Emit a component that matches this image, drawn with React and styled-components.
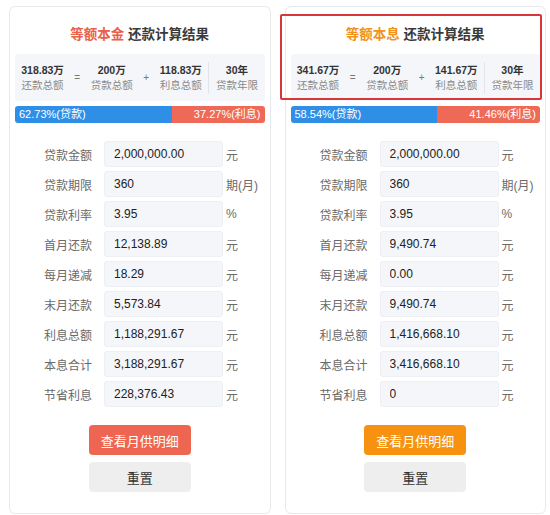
import React from "react";
import styled, { createGlobalStyle } from "styled-components";

const GlobalStyle = createGlobalStyle`
  html, body {
    margin: 0;
    padding: 0;
    background: #ffffff;
    font-family: "Liberation Sans", "Noto Sans CJK SC", sans-serif;
  }
`;

const plans = [
  {
    name: "等额本金",
    accent: "#e9604b",
    button: "#ee6552",
    total: "318.83万",
    principal: "200万",
    interest: "118.83万",
    years: "30年",
    loanPct: 62.73,
    interestPct: "37.27",
    rows: [
      ["贷款金额", "2,000,000.00", "元"],
      ["贷款期限", "360", "期(月)"],
      ["贷款利率", "3.95", "%"],
      ["首月还款", "12,138.89", "元"],
      ["每月递减", "18.29", "元"],
      ["末月还款", "5,573.84", "元"],
      ["利息总额", "1,188,291.67", "元"],
      ["本息合计", "3,188,291.67", "元"],
      ["节省利息", "228,376.43", "元"],
    ],
  },
  {
    name: "等额本息",
    accent: "#f0921c",
    button: "#f79110",
    total: "341.67万",
    principal: "200万",
    interest: "141.67万",
    years: "30年",
    loanPct: 58.54,
    interestPct: "41.46",
    highlight: true,
    rows: [
      ["贷款金额", "2,000,000.00", "元"],
      ["贷款期限", "360", "期(月)"],
      ["贷款利率", "3.95", "%"],
      ["首月还款", "9,490.74", "元"],
      ["每月递减", "0.00", "元"],
      ["末月还款", "9,490.74", "元"],
      ["利息总额", "1,416,668.10", "元"],
      ["本息合计", "3,416,668.10", "元"],
      ["节省利息", "0", "元"],
    ],
  },
];

const ResultCard = ({ plan }) => (
  <Card>
    {plan.highlight && <Highlight />}
    <Title>
      <TitleAccent $color={plan.accent}>{plan.name}</TitleAccent> 还款计算结果
    </Title>
    <Summary>
      <Stat>
        <StatValue>{plan.total}</StatValue>
        <StatLabel>还款总额</StatLabel>
      </Stat>
      <Sign>=</Sign>
      <Stat>
        <StatValue>{plan.principal}</StatValue>
        <StatLabel>贷款总额</StatLabel>
      </Stat>
      <Sign>+</Sign>
      <Stat>
        <StatValue>{plan.interest}</StatValue>
        <StatLabel>利息总额</StatLabel>
      </Stat>
      <Divider />
      <Stat>
        <StatValue>{plan.years}</StatValue>
        <StatLabel>贷款年限</StatLabel>
      </Stat>
    </Summary>
    <Bar>
      <BarPart $color="#2f8fe7" style={{ width: `${plan.loanPct}%` }}>
        {plan.loanPct}%(贷款)
      </BarPart>
      <BarPart $color="#ef6a56" $right>
        {plan.interestPct}%(利息)
      </BarPart>
    </Bar>
    <FormGrid>
      {plan.rows.map(([label, value, unit]) => (
        <React.Fragment key={label}>
          <FieldLabel>{label}</FieldLabel>
          <FieldInput type="text" value={value} readOnly />
          <Unit>{unit}</Unit>
        </React.Fragment>
      ))}
    </FormGrid>
    <Buttons>
      <Button $bg={plan.button} $fg="#ffffff">查看月供明细</Button>
      <Button $bg="#eeeeee" $fg="#333333">重置</Button>
    </Buttons>
  </Card>
);

const App = () => (
  <>
    <GlobalStyle />
    <Page>
      {plans.map((plan) => (
        <ResultCard key={plan.name} plan={plan} />
      ))}
    </Page>
  </>
);

export default App;

const Page = styled.div`
  display: flex;
  gap: 14px;
  padding: 6px 4px 0 9px;
  height: 515px;
  box-sizing: border-box;
  overflow: hidden;
`;

const Card = styled.div`
  position: relative;
  width: 262px;
  height: 508px;
  box-sizing: border-box;
  border: 1px solid #e6e8eb;
  border-radius: 6px;
  padding: 0 5px;
  display: flex;
  flex-direction: column;
  align-items: stretch;
`;

const Highlight = styled.div`
  position: absolute;
  left: -6px;
  top: 7px;
  width: 262px;
  height: 86px;
  box-sizing: border-box;
  border: 2px solid #d8373a;
  border-radius: 2px;
`;

const Title = styled.div`
  text-align: center;
  font-size: 13.5px;
  font-weight: bold;
  color: #3a3a3a;
  margin-top: 19px;
  line-height: 18px;
`;

const TitleAccent = styled.span`
  color: ${(p) => p.$color};
`;

const Summary = styled.div`
  margin-top: 10px;
  height: 47px;
  background: #f4f6f9;
  border-radius: 3px;
  display: flex;
  align-items: center;
`;

const Stat = styled.div`
  flex: 1;
  display: flex;
  flex-direction: column;
  align-items: center;
  gap: 3px;
`;

const StatValue = styled.div`
  font-size: 10.5px;
  font-weight: bold;
  color: #333;
  line-height: 12px;
`;

const StatLabel = styled.div`
  font-size: 10.5px;
  color: #8a8a8a;
  line-height: 12px;
`;

const Sign = styled.div`
  width: 14px;
  text-align: center;
  font-size: 10px;
  color: #777;
`;

const Divider = styled.div`
  width: 0;
  height: 32px;
  border-left: 1px solid #e2e5ea;
`;

const Bar = styled.div`
  margin-top: 5px;
  height: 17px;
  display: flex;
  border-radius: 3px;
  overflow: hidden;
`;

const BarPart = styled.div`
  flex: ${(p) => (p.$right ? 1 : "none")};
  background: ${(p) => p.$color};
  color: #ffffff;
  font-size: 11px;
  line-height: 17px;
  padding: 0 4px;
  text-align: ${(p) => (p.$right ? "right" : "left")};
  box-sizing: border-box;
  white-space: nowrap;
`;

const FormGrid = styled.div`
  margin-top: 18px;
  margin-left: 29px;
  display: grid;
  grid-template-columns: 48px 131px auto;
  grid-auto-rows: 26px;
  row-gap: 4px;
  align-items: center;
`;

const FieldLabel = styled.div`
  font-size: 12px;
  color: #6a6a6a;
  white-space: nowrap;
`;

const FieldInput = styled.input`
  justify-self: end;
  width: 119px;
  height: 26px;
  box-sizing: border-box;
  padding: 0 9px;
  border: 1px solid #eceff3;
  border-radius: 3px;
  background: #f4f6f9;
  font-family: "Liberation Sans", "Noto Sans CJK SC", sans-serif;
  font-size: 12px;
  color: #222;
  outline: none;
`;

const Unit = styled.div`
  margin-left: 3px;
  font-size: 12px;
  color: #6a6a6a;
  white-space: nowrap;
`;

const Buttons = styled.div`
  margin-top: 18px;
  display: flex;
  flex-direction: column;
  align-items: center;
  gap: 7px;
`;

const Button = styled.button`
  width: 102px;
  height: 30px;
  border: none;
  border-radius: 4px;
  background: ${(p) => p.$bg};
  color: ${(p) => p.$fg};
  font-family: "Liberation Sans", "Noto Sans CJK SC", sans-serif;
  font-size: 13px;
  cursor: pointer;
`;
